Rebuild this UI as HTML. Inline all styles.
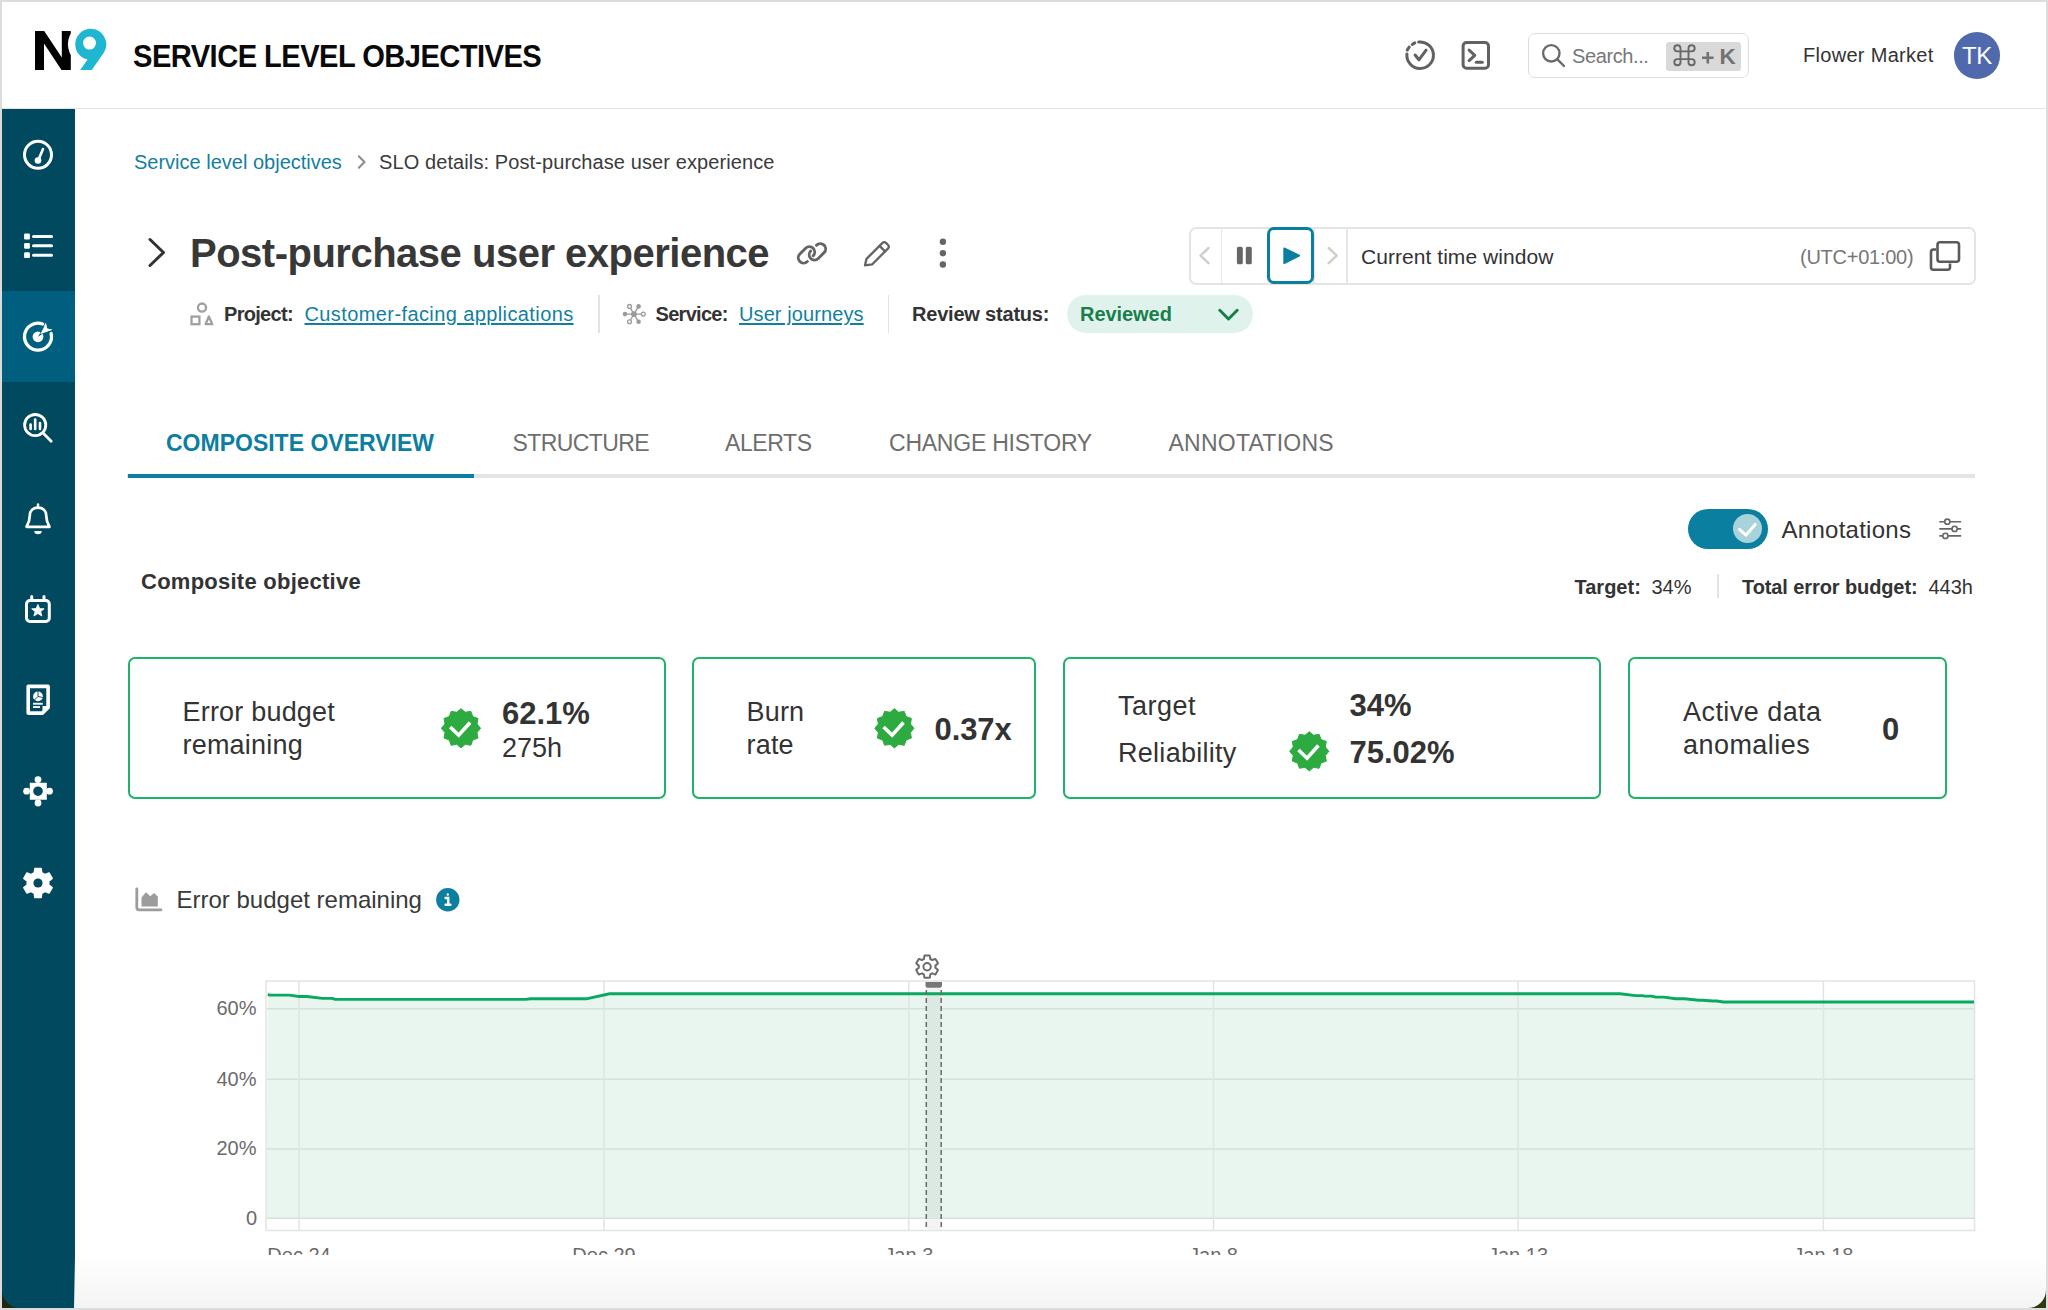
<!DOCTYPE html>
<html><head><meta charset="utf-8">
<style>
html,body{margin:0;padding:0;}
body{width:2048px;height:1310px;position:relative;overflow:hidden;background:#fff;font-family:"Liberation Sans",sans-serif;color:#333;}
.t{position:absolute;line-height:1;white-space:nowrap;}
.a{position:absolute;}
svg{position:absolute;overflow:visible;}
</style></head><body>
<!-- ===== BACKGROUND BLOCKS ===== -->
<div class="a" style="left:0;top:108px;width:2048px;height:1px;background:#e3e3e3;"></div>
<div class="a" style="left:2px;top:109px;width:72.5px;height:1199px;background:#01495f;"></div>
<div class="a" style="left:2px;top:291px;width:72.5px;height:91px;background:#005e7f;"></div>
<!-- search box -->
<div class="a" style="left:1528px;top:33px;width:219px;height:43px;border:1.5px solid #dedede;border-radius:7px;"></div>
<div class="a" style="left:1666px;top:41.5px;width:75px;height:29px;background:#d9d9d9;border-radius:3px;"></div>
<!-- avatar -->
<div class="a" style="left:1953.6px;top:32px;width:46.5px;height:46.5px;background:#5069ad;border-radius:50%;"></div>

<!-- ===== ICONS SVG (page coords) ===== -->
<svg id="icons" style="left:0;top:0" width="2048" height="1310" viewBox="0 0 2048 1310">
  <!-- logo -->
  <path d="M35 31 H44.2 L61.8 57.5 V31 H70.8 V70 H61.5 L44 43.5 V70 H35 Z" fill="#000"/>
  <circle cx="89.5" cy="44.3" r="21.6" fill="#fff"/>
  <path fill="#1fb6d1" fill-rule="evenodd" d="M89.5 28.8 A15.6 15.6 0 0 1 103.6 53 L 91.8 70 H 80.2 L 87.6 59.6 A 15.6 15.6 0 0 1 89.5 28.8 Z M89.5 36.6 A6.5 6.5 0 1 0 89.5 49.6 A6.5 6.5 0 1 0 89.5 36.6 Z"/>
  <!-- header icons -->
  <g fill="none" stroke="#616161" stroke-width="3" stroke-linecap="round" stroke-linejoin="round">
    <path d="M1418.7 41.97 A13.3 13.3 0 1 1 1406.9 53.9"/>
    <path d="M1407.2 50.1 L1409.2 47"/>
    <path d="M1412.2 44.5 L1414.8 42.9"/>
    <path d="M1415.1 55 L1418.9 59.8 L1426.1 50.1"/>
    <rect x="1463.1" y="42.5" width="25.4" height="25.7" rx="3.5"/>
    <path d="M1469.1 50.1 L1474.8 55.3 L1469.1 60.6"/>
    <path d="M1476.3 62.2 H1482.3"/>
  </g>
  <g fill="none" stroke="#6a6a6a" stroke-width="2.4" stroke-linecap="round">
    <circle cx="1551.3" cy="53.3" r="8.2"/>
    <path d="M1557.4 59.4 L1564 66"/>
  </g>
  <!-- cmd symbol -->
  <g fill="none" stroke="#676767" stroke-width="1.9">
    <path d="M1680.5 51.4 H1688.5 V59.1 H1680.5 Z M1680.5 51.4 V48.3 A3.1 3.1 0 1 0 1677.4 51.4 H1680.5 M1688.5 51.4 V48.3 A3.1 3.1 0 1 1 1691.6 51.4 H1688.5 M1680.5 59.1 V62.2 A3.1 3.1 0 1 1 1677.4 59.1 H1680.5 M1688.5 59.1 V62.2 A3.1 3.1 0 1 0 1691.6 59.1 H1688.5"/>
  </g>
  <g stroke="#727272" stroke-width="2.6">
    <path d="M1702 57.8 H1713.6 M1707.8 52 V63.6"/>
  </g>
  <!-- sidebar icons -->
  <g fill="none" stroke="#fff" stroke-width="3" stroke-linecap="round" stroke-linejoin="round">
    <circle cx="38" cy="154.8" r="13.5"/>
    <path d="M38.6 159.5 L43 149" stroke-width="2.6"/>
    <path d="M33.5 236.5 H51.5 M33.5 245.8 H51.5 M33.5 255.2 H51.5"/>
    <path d="M51.1 333.5 A13.5 13.5 0 1 1 42.6 324" stroke-width="3.3"/>
    <circle cx="35.2" cy="425.1" r="10.6" stroke-width="2.8"/>
    <path d="M43.3 433.3 L51.2 441.3" stroke-width="2.8"/>
    <path d="M30.6 424.6 V429 M35.2 419.6 V429 M40 423 V429" stroke-width="2.6"/>
    <path d="M26.6 526.8 C29.3 522 29.8 519 29.8 515.5 C29.8 510.5 33.3 507.6 38 507.6 C42.7 507.6 46.2 510.5 46.2 515.5 C46.2 519 46.7 522 49.4 526.8 Z" stroke-width="2.8"/>
    <path d="M38 504.5 V507" stroke-width="2.4"/>
    <rect x="26.5" y="600.5" width="22.8" height="21" rx="3.5"/>
    <path d="M31.7 596.5 V600 M44 596.5 V600"/>
    <path d="M28.2 686.4 H48.1 V707.5 L42.5 713.1 H28.2 Z" stroke-width="3.6"/>
  </g>
  <g fill="#fff">
    <circle cx="38" cy="160.5" r="3.3"/>
    <rect x="24.1" y="233.6" width="5.8" height="5.8" rx="1.2"/>
    <rect x="24.1" y="242.9" width="5.8" height="5.8" rx="1.2"/>
    <rect x="24.1" y="252.3" width="5.8" height="5.8" rx="1.2"/>
    <circle cx="38" cy="336.8" r="5.4"/>
    <path d="M40 333.8 L45.8 322.8 L47.1 328.4 L52.6 329.8 Z"/>
    <circle cx="38" cy="534" r="0"/>
    <path d="M34.3 531 H41.7 A3.7 3.2 0 0 1 34.3 531 Z"/>
    <path d="M37.9 604.4 L39.7 608.6 L44.1 608.8 L40.7 611.6 L41.9 616 L37.9 613.6 L33.9 616 L35.1 611.6 L31.7 608.8 L36.1 608.6 Z" stroke="#fff" stroke-width="0.8" stroke-linejoin="round"/>
    <path d="M42.5 706 H48.3 L42.5 712 Z"/>
    <circle cx="38" cy="696.4" r="4.9"/>
    <rect x="33" y="702.8" width="9.8" height="1.9"/>
    <rect x="33" y="706.1" width="7" height="1.9"/>
    <path fill-rule="evenodd" d="M29.8 782.8 H46.8 V799.8 H29.8 Z M38 786.4 A4.8 4.8 0 1 0 38 796 A4.8 4.8 0 1 0 38 786.4 Z"/>
    <circle cx="38" cy="779.6" r="3.4"/><circle cx="38" cy="803" r="3.4"/>
    <circle cx="26.6" cy="791.2" r="3.4"/><circle cx="49.5" cy="791.2" r="3.4"/>
    <path transform="translate(38,883) scale(1.6) translate(-12,-12)" d="M19.14,12.94c0.04-0.3,0.06-0.61,0.06-0.94c0-0.32-0.02-0.64-0.07-0.94l2.03-1.58c0.18-0.14,0.23-0.41,0.12-0.61l-1.92-3.32c-0.12-0.22-0.37-0.29-0.59-0.22l-2.39,0.96c-0.5-0.38-1.03-0.7-1.62-0.94L14.4,2.81c-0.04-0.24-0.24-0.41-0.48-0.41h-3.84c-0.24,0-0.43,0.17-0.47,0.41L9.25,5.35C8.66,5.59,8.12,5.920,7.63,6.29L5.24,5.33c-0.22-0.08-0.47,0-0.59,0.22L2.74,8.87C2.62,9.08,2.66,9.34,2.86,9.48l2.03,1.58C4.84,11.36,4.8,11.69,4.8,12s0.02,0.64,0.07,0.94l-2.03,1.58c-0.18,0.14-0.23,0.41-0.12,0.61l1.920,3.32c0.12,0.22,0.37,0.29,0.59,0.22l2.39-0.96c0.5,0.38,1.03,0.7,1.62,0.94l0.36,2.54c0.05,0.24,0.24,0.41,0.48,0.41h3.84c0.24,0,0.44-0.17,0.47-0.41l0.36-2.54c0.59-0.24,1.13-0.56,1.62-0.94l2.39,0.96c0.22,0.08,0.47,0,0.59-0.22l1.92-3.32c0.12-0.22,0.07-0.47-0.12-0.61L19.14,12.94z"/>
    <circle cx="38" cy="883" r="4.6" fill="#02485e"/>
  </g>
  <!-- target icon wedge & doc pie gaps -->
  <path d="M38 336.8 L44 326 L48 330.5 Z" fill="#005e7f"/>
  <path d="M40.3 334.2 L46 323.5 L47 328.4 L52 329.8 Z" fill="#fff"/>
  <g stroke="#02485e" stroke-width="0.9" fill="none">
    <path d="M38 696.4 V691 M38 696.4 L43 697.6 M38 696.4 L34.4 700"/>
  </g>
</svg>

<!-- ===== TEXT ===== -->
<div class="t" style="left:133px;top:40.6px;font-size:31.5px;font-weight:700;letter-spacing:-0.6px;transform:scaleX(0.925);transform-origin:0 0;color:#0a0a0a;">SERVICE LEVEL OBJECTIVES</div>
<div class="t" style="left:1803px;top:44.5px;font-size:20px;letter-spacing:0.3px;color:#333;">Flower Market</div>
<div class="t" style="left:1572px;top:46.3px;font-size:20px;letter-spacing:-0.4px;color:#777;">Search...</div>
<div class="t" style="left:1719.5px;top:46px;font-size:22.5px;font-weight:700;color:#727272;">K</div>
<div class="t" style="left:1962px;top:44px;font-size:24px;color:#fff;letter-spacing:-0.5px;">TK</div>

<!-- breadcrumb -->
<div class="t" style="left:134px;top:152px;font-size:20px;color:#137fa0;">Service level objectives</div>
<div class="t" style="left:379px;top:152px;font-size:20px;letter-spacing:0.1px;color:#3b3b3b;">SLO details: Post-purchase user experience</div>
<svg style="left:0;top:0" width="2048" height="1310" viewBox="0 0 2048 1310">
  <path d="M358.8 156.3 L364.5 162 L358.8 167.7" fill="none" stroke="#8a8a8a" stroke-width="2" stroke-linecap="round" stroke-linejoin="round"/>
  <!-- title chevron -->
  <path d="M150 239.5 L163.5 252.5 L150 265.5" fill="none" stroke="#333" stroke-width="3" stroke-linecap="round" stroke-linejoin="round"/>
  <!-- link icon -->
  <g fill="none" stroke="#646464" stroke-width="2.9" stroke-linecap="round">
    <path d="M807.35 261.55 A5.3 5.3 0 0 1 799.85 254.05 L805.65 248.25 A5.3 5.3 0 0 1 813.15 255.75"/>
    <path d="M816.55 245.15 A5.3 5.3 0 0 1 824.05 252.65 L818.25 258.45 A5.3 5.3 0 0 1 810.75 250.95"/>
  </g>
  <!-- pencil -->
  <g fill="none" stroke="#646464" stroke-width="2.5" stroke-linejoin="round" stroke-linecap="round" transform="translate(865,265.3) scale(0.93) translate(-865,-265.3)">
    <path d="M865 265.3 L866.6 258.4 L883.6 241.4 A3 3 0 0 1 887.8 241.4 L889.6 243.2 A3 3 0 0 1 889.6 247.4 L872.6 264.4 Z"/>
    <path d="M880.6 244.4 L886.6 250.4"/>
  </g>
  <g fill="#646464">
    <circle cx="942.9" cy="241.8" r="3.2"/><circle cx="942.9" cy="253.2" r="3.2"/><circle cx="942.9" cy="264.5" r="3.2"/>
  </g>
  <!-- project icon -->
  <g fill="none" stroke="#a0a0a0" stroke-width="2.3">
    <circle cx="202" cy="307.6" r="4.1"/>
    <rect x="191.5" y="316.6" width="7.9" height="7.6"/>
    <path d="M205.6 324.2 H212.2 L208.9 316.4 Z" stroke-linejoin="round"/>
  </g>
  <!-- service icon -->
  <g stroke="#9a9a9a" stroke-width="1.3">
    <path d="M633.9 314.1 L629.5 306.4 M633.9 314.1 L638.6 306.4 M633.9 314.1 H625 M633.9 314.1 H643.3 M633.9 314.1 L629.5 321.8 M633.9 314.1 L638.6 321.8"/>
  </g>
  <g fill="#9a9a9a">
    <circle cx="633.9" cy="314.1" r="2.9"/>
    <circle cx="638.6" cy="306.4" r="2.3"/><circle cx="625" cy="314.1" r="2.3"/><circle cx="638.6" cy="321.8" r="2.3"/>
  </g>
  <g fill="#fff" stroke="#9a9a9a" stroke-width="1.3">
    <circle cx="629.5" cy="306.4" r="1.9"/><circle cx="643.3" cy="314.1" r="1.9"/><circle cx="629.5" cy="321.8" r="1.9"/>
  </g>
</svg>
<!-- title -->
<div class="t" style="left:190px;top:233px;font-size:40px;font-weight:700;letter-spacing:-0.5px;color:#383838;">Post-purchase user experience</div>
<!-- meta row -->
<div class="t" style="left:224px;top:304px;font-size:20px;font-weight:700;letter-spacing:-0.7px;color:#333;">Project:</div>
<div class="t" style="left:304.5px;top:304px;font-size:20px;letter-spacing:0.4px;color:#137fa0;text-decoration:underline;text-decoration-thickness:1.5px;text-underline-offset:1.5px;">Customer-facing applications</div>
<div class="a" style="left:598px;top:295px;width:1.5px;height:37.5px;background:#e2e2e2;"></div>
<div class="t" style="left:655.5px;top:304px;font-size:20px;font-weight:700;letter-spacing:-0.7px;color:#333;">Service:</div>
<div class="t" style="left:739px;top:304px;font-size:20px;letter-spacing:0.1px;color:#137fa0;text-decoration:underline;text-decoration-thickness:1.5px;text-underline-offset:1.5px;">User journeys</div>
<div class="a" style="left:887.5px;top:295px;width:1.5px;height:37.5px;background:#e2e2e2;"></div>
<div class="t" style="left:912px;top:304px;font-size:20px;font-weight:700;letter-spacing:-0.2px;color:#333;">Review status:</div>
<div class="a" style="left:1066.5px;top:295px;width:186.5px;height:37.5px;background:#dff3ec;border-radius:19px;"></div>
<div class="t" style="left:1080px;top:304px;font-size:20px;font-weight:700;letter-spacing:-0.06px;color:#1a7e4c;">Reviewed</div>
<svg style="left:0;top:0" width="2048" height="1310" viewBox="0 0 2048 1310">
  <path d="M1219.8 310.3 L1228.5 319 L1237.2 310.3" fill="none" stroke="#1a7e4c" stroke-width="3" stroke-linecap="round" stroke-linejoin="round"/>
</svg>
<!-- time controls -->
<div class="a" style="left:1189px;top:227px;width:783px;height:54px;border:2px solid #e4e4e4;border-radius:7px;"></div>
<div class="a" style="left:1220.5px;top:228px;width:1.5px;height:55px;background:#e6e6e6;"></div>
<div class="a" style="left:1346px;top:228px;width:1.5px;height:55px;background:#e6e6e6;"></div>
<div class="a" style="left:1313px;top:228px;width:1.5px;height:55px;background:#e6e6e6;"></div>
<div class="a" style="left:1266.8px;top:227px;width:41.2px;height:51.2px;border:3.3px solid #0a7f9f;border-radius:7px;background:#fff;"></div>
<svg style="left:0;top:0" width="2048" height="1310" viewBox="0 0 2048 1310">
  <path d="M1208.5 248 L1200.5 255.6 L1208.5 263.2" fill="none" stroke="#cfcfcf" stroke-width="2.5" stroke-linecap="round" stroke-linejoin="round"/>
  <path d="M1328.7 248 L1336.7 255.6 L1328.7 263.2" fill="none" stroke="#cfcfcf" stroke-width="2.5" stroke-linecap="round" stroke-linejoin="round"/>
  <rect x="1236.9" y="246.8" width="5.9" height="17.5" rx="1.6" fill="#676767"/>
  <rect x="1245.8" y="246.8" width="6" height="17.5" rx="1.6" fill="#676767"/>
  <path d="M1284.2 248.3 L1299.2 255.6 L1284.2 263.2 Z" fill="#0a7f9f" stroke="#0a7f9f" stroke-width="1.8" stroke-linejoin="round"/>
  <g fill="none" stroke="#5a5a5a" stroke-width="2.6" stroke-linejoin="round">
    <rect x="1937.5" y="242.3" width="21.5" height="19.5" rx="2.5"/>
    <path d="M1936 249.5 H1933.5 A2.5 2.5 0 0 0 1931 252 V267.3 A2.5 2.5 0 0 0 1933.5 269.8 H1947.5 A2.5 2.5 0 0 0 1950 267.3 V263.5"/>
  </g>
</svg>
<div class="t" style="left:1361px;top:245.7px;font-size:21px;letter-spacing:0.05px;color:#333;">Current time window</div>
<div class="t" style="left:1800px;top:246.6px;font-size:20px;letter-spacing:-0.25px;color:#777;">(UTC+01:00)</div>

<!-- tabs -->
<div class="a" style="left:127px;top:474px;width:1848px;height:3.6px;background:#e4e4e4;"></div>
<div class="a" style="left:127.5px;top:474.2px;width:346.5px;height:3.5px;background:#0a7f9f;"></div>
<div class="t" style="left:166px;top:432.3px;font-size:23px;font-weight:700;letter-spacing:0px;color:#0c7fa0;">COMPOSITE OVERVIEW</div>
<div class="t" style="left:512.5px;top:432.3px;font-size:23px;letter-spacing:-0.6px;color:#6e6e6e;">STRUCTURE</div>
<div class="t" style="left:725px;top:432.3px;font-size:23px;letter-spacing:-0.4px;color:#6e6e6e;">ALERTS</div>
<div class="t" style="left:889px;top:432.3px;font-size:23px;letter-spacing:-0.23px;color:#6e6e6e;">CHANGE HISTORY</div>
<div class="t" style="left:1168.5px;top:432.3px;font-size:23px;letter-spacing:0.24px;color:#6e6e6e;">ANNOTATIONS</div>
<!-- annotations toggle -->
<div class="a" style="left:1688px;top:509px;width:79.5px;height:40px;background:#0a7f9f;border-radius:20px;"></div>
<div class="a" style="left:1732.8px;top:514.3px;width:29.2px;height:29.2px;background:#a8d3da;border-radius:50%;"></div>
<div class="t" style="left:1781.5px;top:517.6px;font-size:24px;letter-spacing:0.27px;color:#333;">Annotations</div>
<div class="t" style="left:141px;top:571.3px;font-size:22px;font-weight:700;letter-spacing:0.25px;color:#333;">Composite objective</div>
<div class="t" style="left:1574.5px;top:576.5px;font-size:20px;font-weight:700;color:#333;">Target:</div>
<div class="t" style="left:1651.5px;top:576.5px;font-size:20px;color:#333;">34%</div>
<div class="a" style="left:1717px;top:574.3px;width:1.5px;height:23.6px;background:#e3e3e3;"></div>
<div class="t" style="left:1742px;top:576.5px;font-size:20px;font-weight:700;letter-spacing:-0.1px;color:#333;">Total error budget:</div>
<div class="t" style="left:1928.5px;top:576.5px;font-size:20px;color:#333;">443h</div>
<!-- cards -->
<div class="a" style="left:127.5px;top:657.3px;width:534px;height:138px;border:2px solid #1fb26b;border-radius:7px;"></div>
<div class="a" style="left:692px;top:657.3px;width:340px;height:138px;border:2px solid #1fb26b;border-radius:7px;"></div>
<div class="a" style="left:1063px;top:657.3px;width:533.6px;height:138px;border:2px solid #1fb26b;border-radius:7px;"></div>
<div class="a" style="left:1627.5px;top:657.3px;width:315px;height:138px;border:2px solid #1fb26b;border-radius:7px;"></div>
<div class="t" style="left:182.5px;font-size:27px;letter-spacing:0.2px;line-height:33px;top:695.9px;color:#333;white-space:pre;">Error budget
remaining</div>
<div class="t" style="left:502px;top:697.6px;font-size:31px;font-weight:700;color:#333;">62.1%</div>
<div class="t" style="left:502px;top:734.5px;font-size:27px;color:#333;">275h</div>
<div class="t" style="left:746.5px;top:695.9px;font-size:27px;letter-spacing:0.2px;line-height:33px;color:#333;white-space:pre;">Burn
rate</div>
<div class="t" style="left:934.5px;top:713.5px;font-size:31px;font-weight:700;letter-spacing:-0.1px;color:#333;">0.37x</div>
<div class="t" style="left:1118px;top:692.7px;font-size:27px;letter-spacing:0.5px;color:#333;">Target</div>
<div class="t" style="left:1118px;top:740.1px;font-size:27px;letter-spacing:0.28px;color:#333;">Reliability</div>
<div class="t" style="left:1349.5px;top:690.3px;font-size:31px;font-weight:700;color:#333;">34%</div>
<div class="t" style="left:1349.5px;top:736.8px;font-size:31px;font-weight:700;color:#333;">75.02%</div>
<div class="t" style="left:1683px;top:695.9px;font-size:27px;letter-spacing:0.45px;line-height:33px;color:#333;white-space:pre;">Active data
anomalies</div>
<div class="t" style="left:1882px;top:713.5px;font-size:31px;font-weight:700;color:#333;">0</div>
<!-- chart title -->
<div class="t" style="left:176.5px;top:888.4px;font-size:24px;letter-spacing:0px;color:#3a3a3a;">Error budget remaining</div>
<!-- chart labels -->
<div class="t" style="left:216.5px;top:998px;font-size:20px;color:#6b6b6b;">60%</div>
<div class="t" style="left:216.5px;top:1068.5px;font-size:20px;color:#6b6b6b;">40%</div>
<div class="t" style="left:216.5px;top:1138px;font-size:20px;color:#6b6b6b;">20%</div>
<div class="t" style="left:246px;top:1207.5px;font-size:20px;color:#6b6b6b;">0</div>
<div class="a" style="left:0;top:1240px;width:2048px;height:14.5px;overflow:hidden;">
  <div class="t" style="left:239px;width:120px;text-align:center;top:4.5px;font-size:20px;color:#6b6b6b;">Dec 24</div>
  <div class="t" style="left:544px;width:120px;text-align:center;top:4.5px;font-size:20px;color:#6b6b6b;">Dec 29</div>
  <div class="t" style="left:848.8px;width:120px;text-align:center;top:4.5px;font-size:20px;color:#6b6b6b;">Jan 3</div>
  <div class="t" style="left:1153.5px;width:120px;text-align:center;top:4.5px;font-size:20px;color:#6b6b6b;">Jan 8</div>
  <div class="t" style="left:1458px;width:120px;text-align:center;top:4.5px;font-size:20px;color:#6b6b6b;">Jan 13</div>
  <div class="t" style="left:1763.4px;width:120px;text-align:center;top:4.5px;font-size:20px;color:#6b6b6b;">Jan 18</div>
</div>
<svg style="left:0;top:0" width="2048" height="1310" viewBox="0 0 2048 1310">
  <!-- toggle check -->
  <path d="M1739.5 529.3 L1745.9 535.2 L1755.2 524.4" fill="none" stroke="#fff" stroke-width="3" stroke-linecap="round" stroke-linejoin="round"/>
  <!-- sliders -->
  <g stroke="#666" stroke-width="1.6" fill="#fff">
    <path d="M1939.3 521.7 H1961.2 M1939.3 528.9 H1961.2 M1939.3 535.9 H1961.2" fill="none"/>
    <circle cx="1947.3" cy="521.7" r="2.6"/><circle cx="1954.6" cy="528.9" r="2.6"/><circle cx="1945.4" cy="535.9" r="2.6"/>
  </g>
  <!-- badges -->
  <g fill="#2eab40" stroke="#2eab40" stroke-width="1" stroke-linejoin="round">
    <path transform="translate(461,728.3)" d="M0.00 -19.60 L4.30 -16.03 L9.80 -16.97 L11.74 -11.74 L16.97 -9.80 L16.03 -4.30 L19.60 0.00 L16.03 4.30 L16.97 9.80 L11.74 11.74 L9.80 16.97 L4.30 16.03 L0.00 19.60 L-4.30 16.03 L-9.80 16.97 L-11.74 11.74 L-16.97 9.80 L-16.03 4.30 L-19.60 0.00 L-16.03 -4.30 L-16.97 -9.80 L-11.74 -11.74 L-9.80 -16.97 L-4.30 -16.03 Z"/>
    <path transform="translate(894.4,728.3)" d="M0.00 -19.60 L4.30 -16.03 L9.80 -16.97 L11.74 -11.74 L16.97 -9.80 L16.03 -4.30 L19.60 0.00 L16.03 4.30 L16.97 9.80 L11.74 11.74 L9.80 16.97 L4.30 16.03 L0.00 19.60 L-4.30 16.03 L-9.80 16.97 L-11.74 11.74 L-16.97 9.80 L-16.03 4.30 L-19.60 0.00 L-16.03 -4.30 L-16.97 -9.80 L-11.74 -11.74 L-9.80 -16.97 L-4.30 -16.03 Z"/>
    <path transform="translate(1309.3,751.3)" d="M0.00 -19.60 L4.30 -16.03 L9.80 -16.97 L11.74 -11.74 L16.97 -9.80 L16.03 -4.30 L19.60 0.00 L16.03 4.30 L16.97 9.80 L11.74 11.74 L9.80 16.97 L4.30 16.03 L0.00 19.60 L-4.30 16.03 L-9.80 16.97 L-11.74 11.74 L-16.97 9.80 L-16.03 4.30 L-19.60 0.00 L-16.03 -4.30 L-16.97 -9.80 L-11.74 -11.74 L-9.80 -16.97 L-4.30 -16.03 Z"/>
  </g>
  <g fill="none" stroke="#fff" stroke-width="3.6" stroke-linecap="square">
    <path transform="translate(461,728.3)" d="M-9.5 0 L-2.3 6.9 L7.9 -4.5"/>
    <path transform="translate(894.4,728.3)" d="M-9.5 0 L-2.3 6.9 L7.9 -4.5"/>
    <path transform="translate(1309.3,751.3)" d="M-9.5 0 L-2.3 6.9 L7.9 -4.5"/>
  </g>
  <!-- chart header icons -->
  <path d="M136.8 888.8 V907.5 Q136.8 909.8 139 909.8 H161" fill="none" stroke="#9c9c9c" stroke-width="2.8" stroke-linecap="round"/>
  <path d="M141.5 906.5 V897.5 L146 892.3 L150.3 896.3 L154 893 L157.8 896.6 V906.5 Z" fill="#9c9c9c"/>
  <circle cx="447.8" cy="899.8" r="11.7" fill="#0c7fa0"/>
  <path d="M447.8 894.5 V894.6 M445.6 898 H448.2 V904.6 M445.6 904.8 H450.4" fill="none" stroke="#fff" stroke-width="2.4" stroke-linecap="round"/>
  <!-- chart -->
  <path d="M267.8 994.5 L269.8 995.1 L289.3 995.1 L299 996.5 L306.9 996.5 L322.5 998.4 L332.3 998.4 L335.2 999.4 L525.6 999.4 L530.5 998.8 L586.2 998.8 L609.6 993.75 L1620 993.7 L1635.7 995.6 L1642.5 995.6 L1644.5 996.1 L1651.3 996.1 L1656 997.1 L1664 997.1 L1675.7 998.75 L1684.5 998.75 L1699 1000.2 L1703 1000.2 L1712.8 1001 L1716.7 1001 L1723.5 1002 L1974 1002 L1974 1218.3 L266.5 1218.3 Z" fill="#e8f6ef"/>
  <g stroke="#d3e2dc" stroke-width="1.5">
    <path d="M266.5 1008.7 H1974 M266.5 1079.2 H1974 M266.5 1148.9 H1974 M266.5 1218.3 H1974"/>
  </g>
  <g stroke="#dfe5e2" stroke-width="1.5">
    <path d="M299 981 V1230 M604 981 V1230 M908.8 981 V1230 M1213.5 981 V1230 M1518 981 V1230 M1823.4 981 V1230"/>
  </g>
  <rect x="266" y="981" width="1708.5" height="249.5" fill="none" stroke="#e3e3e3" stroke-width="1.5"/>
  <!-- annotation band -->
  <rect x="926.5" y="988" width="14.5" height="6" fill="#f3f3f3"/>
  <rect x="926.5" y="995" width="14.5" height="223" fill="#dce9e3"/>
  <rect x="926.5" y="1219" width="14.5" height="11" fill="#f3f3f3"/>
  <path d="M267.8 994.5 L269.8 995.1 L289.3 995.1 L299 996.5 L306.9 996.5 L322.5 998.4 L332.3 998.4 L335.2 999.4 L525.6 999.4 L530.5 998.8 L586.2 998.8 L609.6 993.75 L1620 993.7 L1635.7 995.6 L1642.5 995.6 L1644.5 996.1 L1651.3 996.1 L1656 997.1 L1664 997.1 L1675.7 998.75 L1684.5 998.75 L1699 1000.2 L1703 1000.2 L1712.8 1001 L1716.7 1001 L1723.5 1002 L1974 1002" fill="none" stroke="#0aa962" stroke-width="2.9" stroke-linejoin="round"/>
  <g stroke="#6b6b6b" stroke-width="1.5" stroke-dasharray="5 3">
    <path d="M926.3 990 V1230 M941.2 990 V1230"/>
  </g>
  <path d="M925.5 982 H942 V985.5 Q942 987.7 939.8 987.7 H927.7 Q925.5 987.7 925.5 985.5 Z" fill="#777"/>
  <!-- gear outline -->
  <g transform="translate(927.1,966.7)" fill="none" stroke="#6b6b6b" stroke-linejoin="round">
    <path transform="scale(1.16) translate(-12,-12)" stroke-width="1.72" d="M19.14,12.94c0.04-0.3,0.06-0.61,0.06-0.94c0-0.32-0.02-0.64-0.07-0.94l2.03-1.58c0.18-0.14,0.23-0.41,0.12-0.61l-1.92-3.32c-0.12-0.22-0.37-0.29-0.59-0.22l-2.39,0.96c-0.5-0.38-1.03-0.7-1.62-0.94L14.4,2.81c-0.04-0.24-0.24-0.41-0.48-0.41h-3.84c-0.24,0-0.43,0.17-0.47,0.41L9.25,5.35C8.66,5.59,8.12,5.920,7.63,6.29L5.24,5.33c-0.22-0.08-0.47,0-0.59,0.22L2.74,8.87C2.62,9.08,2.66,9.34,2.86,9.48l2.03,1.58C4.84,11.36,4.8,11.69,4.8,12s0.02,0.64,0.07,0.94l-2.03,1.58c-0.18,0.14-0.23,0.41-0.12,0.61l1.920,3.32c0.12,0.22,0.37,0.29,0.59,0.22l2.39-0.96c0.5,0.38,1.03,0.7,1.62,0.94l0.36,2.54c0.05,0.24,0.24,0.41,0.48,0.41h3.84c0.24,0,0.44-0.17,0.47-0.41l0.36-2.54c0.59-0.24,1.13-0.56,1.62-0.94l2.39,0.96c0.22,0.08,0.47,0,0.59-0.22l1.92-3.32c0.12-0.22,0.07-0.47-0.12-0.61L19.14,12.94z"/>
    <circle r="3.7" stroke-width="2"/>
  </g>
</svg>
<!-- bottom fade -->
<div class="a" style="left:74px;top:1256px;width:1972px;height:52px;background:linear-gradient(to bottom, rgba(255,255,255,0) 0%, #f4f4f4 100%);"></div>

<!-- MAIN_CONTENT -->

<!-- rounded window corners -->
<svg style="left:0;top:0" width="2048" height="1310" viewBox="0 0 2048 1310">
  <path d="M2 1290 V1308 H20 A18 18 0 0 1 2 1290 Z" fill="#22260f"/>
  <path d="M2046 1290 V1308 H2028 A18 18 0 0 0 2046 1290 Z" fill="#2d3a10"/>
</svg>
<!-- window border -->
<div class="a" style="left:0;top:0;width:2048px;height:2px;background:#dcdcdc;"></div>
<div class="a" style="left:0;top:1308px;width:2048px;height:2px;background:#dcdcdc;"></div>
<div class="a" style="left:0;top:0;width:2px;height:1310px;background:#dcdcdc;"></div>
<div class="a" style="left:2046px;top:0;width:2px;height:1310px;background:#dcdcdc;"></div>
</body></html>
